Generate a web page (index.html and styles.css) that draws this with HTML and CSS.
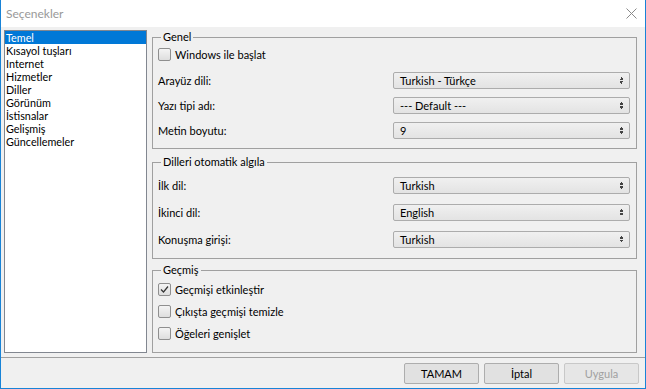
FILE: index.html
```html
<!DOCTYPE html>
<html lang="tr">
<head>
    <meta charset="UTF-8">
    <title>Seçenekler</title>
    <link rel="stylesheet" href="styles.css">
</head>
<body>
    <div class="window">
        <div class="titlebar">
            <span class="title">Seçenekler</span>
            <span class="close">
                <svg width="11" height="11" viewBox="0 0 11 11"><path d="M0.5 0.5 L10.5 10.5 M10.5 0.5 L0.5 10.5" stroke="#8a8a8a" stroke-width="1" fill="none"/></svg>
            </span>
        </div>

        <div class="content">
            <div class="main">
                <ul class="pages">
                    <li class="selected">Temel</li>
                    <li>Kısayol tuşları</li>
                    <li>Internet</li>
                    <li>Hizmetler</li>
                    <li>Diller</li>
                    <li>Görünüm</li>
                    <li>İstisnalar</li>
                    <li>Gelişmiş</li>
                    <li>Güncellemeler</li>
                </ul>

                <div class="panels">
                    <fieldset class="group group-general">
                        <legend>Genel</legend>
                        <div class="group-body">
                            <label class="check-row"><span class="checkbox"></span>Windows ile başlat</label>
                            <div class="field-row">
                                <span class="field-label">Arayüz dili:</span>
                                <span class="combo">Turkish - Türkçe</span>
                            </div>
                            <div class="field-row">
                                <span class="field-label">Yazı tipi adı:</span>
                                <span class="combo">--- Default ---</span>
                            </div>
                            <div class="field-row">
                                <span class="field-label">Metin boyutu:</span>
                                <span class="combo">9</span>
                            </div>
                        </div>
                    </fieldset>

                    <fieldset class="group group-detect">
                        <legend>Dilleri otomatik algıla</legend>
                        <div class="group-body">
                            <div class="field-row">
                                <span class="field-label">İlk dil:</span>
                                <span class="combo">Turkish</span>
                            </div>
                            <div class="field-row">
                                <span class="field-label">İkinci dil:</span>
                                <span class="combo">English</span>
                            </div>
                            <div class="field-row">
                                <span class="field-label">Konuşma girişi:</span>
                                <span class="combo">Turkish</span>
                            </div>
                        </div>
                    </fieldset>

                    <fieldset class="group group-history">
                        <legend>Geçmiş</legend>
                        <div class="group-body">
                            <label class="check-row"><span class="checkbox checked"><svg width="9" height="9" viewBox="0 0 9 9"><path d="M1 4.5 L3.5 7 L8 1.5" stroke="#333" stroke-width="1.2" fill="none"/></svg></span>Geçmişi etkinleştir</label>
                            <label class="check-row"><span class="checkbox"></span>Çıkışta geçmişi temizle</label>
                            <label class="check-row"><span class="checkbox"></span>Öğeleri genişlet</label>
                        </div>
                    </fieldset>
                </div>
            </div>

            <div class="footer">
                <button type="button" class="btn">TAMAM</button>
                <button type="button" class="btn">İptal</button>
                <button type="button" class="btn" disabled>Uygula</button>
            </div>
        </div>
    </div>
</body>
</html>
```

FILE: styles.css
```css
body {
    margin: 0;
    font-family: Lato, "Noto Sans", sans-serif;
    font-size: 11px;
    color: #000;
}
.window {
    width: 646px;
    height: 389px;
    box-sizing: border-box;
    border: 1px solid #1883d7;
    border-top: none;
    background-color: #f0f0f0;
    display: flex;
    flex-direction: column;
}
.titlebar {
    height: 27px;
    background-color: #fff;
    display: flex;
    align-items: center;
    justify-content: space-between;
    padding: 0 8px 0 5px;
    flex-shrink: 0;
}
.title {
    font-size: 12px;
    color: #999;
}
.close {
    display: flex;
    width: 11px;
    height: 11px;
}
.content {
    flex: 1;
    display: flex;
    flex-direction: column;
    padding-top: 3px;
}
.main {
    display: flex;
    height: 323px;
    padding: 0 8px 0 3px;
    gap: 5px;
}
.pages {
    list-style: none;
    margin: 0;
    padding: 0;
    width: 143px;
    box-sizing: border-box;
    border: 1px solid #828790;
    background-color: #fff;
    font-size: 10.8px;
}
.pages li {
    height: 13px;
    line-height: 13px;
    padding-left: 1px;
}
.pages li.selected {
    background-color: #0078d7;
    color: #fff;
}
.panels {
    flex: 1;
    display: flex;
    flex-direction: column;
}
.group {
    margin: 0;
    padding: 0;
    border: 1px solid #a0a0a0;
    box-sizing: border-box;
}
.group legend {
    margin-left: 8px;
    padding: 0 2px;
    line-height: 14px;
}
.group-general { height: 119px; }
.group-detect { height: 104px; margin-top: 6px; }
.group-history { height: 90px; margin-top: 4px; }

.group-body {
    display: flex;
    flex-direction: column;
    padding: 0 6px 0 5px;
}
.group-general .group-body { gap: 8px; }
.group-detect .group-body { gap: 10px; padding-top: 8px; }
.group-history .group-body { padding-top: 1px; }

.check-row {
    display: flex;
    align-items: center;
    gap: 4px;
    height: 20px;
}
.group-history .check-row { height: 22px; }
.checkbox {
    width: 13px;
    height: 13px;
    box-sizing: border-box;
    border: 1px solid #8f8f8f;
    border-radius: 2px;
    background: linear-gradient(#f4f4f4, #dedede);
    display: flex;
    align-items: center;
    justify-content: center;
}
.field-row {
    display: flex;
    align-items: center;
    justify-content: space-between;
    height: 17px;
}
.combo {
    width: 237px;
    height: 17px;
    box-sizing: border-box;
    border: 1px solid #acacac;
    border-radius: 2px;
    background: linear-gradient(#f0f0f0, #e3e3e3);
    padding-left: 6px;
    line-height: 15px;
    position: relative;
}
.combo::after {
    content: "";
    position: absolute;
    right: 5px;
    top: 4px;
    width: 5px;
    height: 7px;
    background:
        linear-gradient(to bottom right, transparent 50%, #444 50%) 0 0 / 3px 3px no-repeat,
        linear-gradient(to bottom left, transparent 50%, #444 50%) 2px 0 / 3px 3px no-repeat,
        linear-gradient(to top right, transparent 50%, #444 50%) 0 4px / 3px 3px no-repeat,
        linear-gradient(to top left, transparent 50%, #444 50%) 2px 4px / 3px 3px no-repeat;
}
.footer {
    margin-top: 4px;
    border-top: 1px solid #a0a0a0;
    padding: 5px 6px 0 0;
    display: flex;
    justify-content: flex-end;
    gap: 5px;
}
.btn {
    width: 75px;
    height: 21px;
    font-family: inherit;
    font-size: 11px;
    color: #000;
    background-color: #e1e1e1;
    border: 1px solid #adadad;
    border-radius: 2px;
    padding: 0;
}
.btn:disabled {
    color: #a0a0a0;
    background-color: #e6e6e6;
    border-color: #c8c8c8;
}
```
